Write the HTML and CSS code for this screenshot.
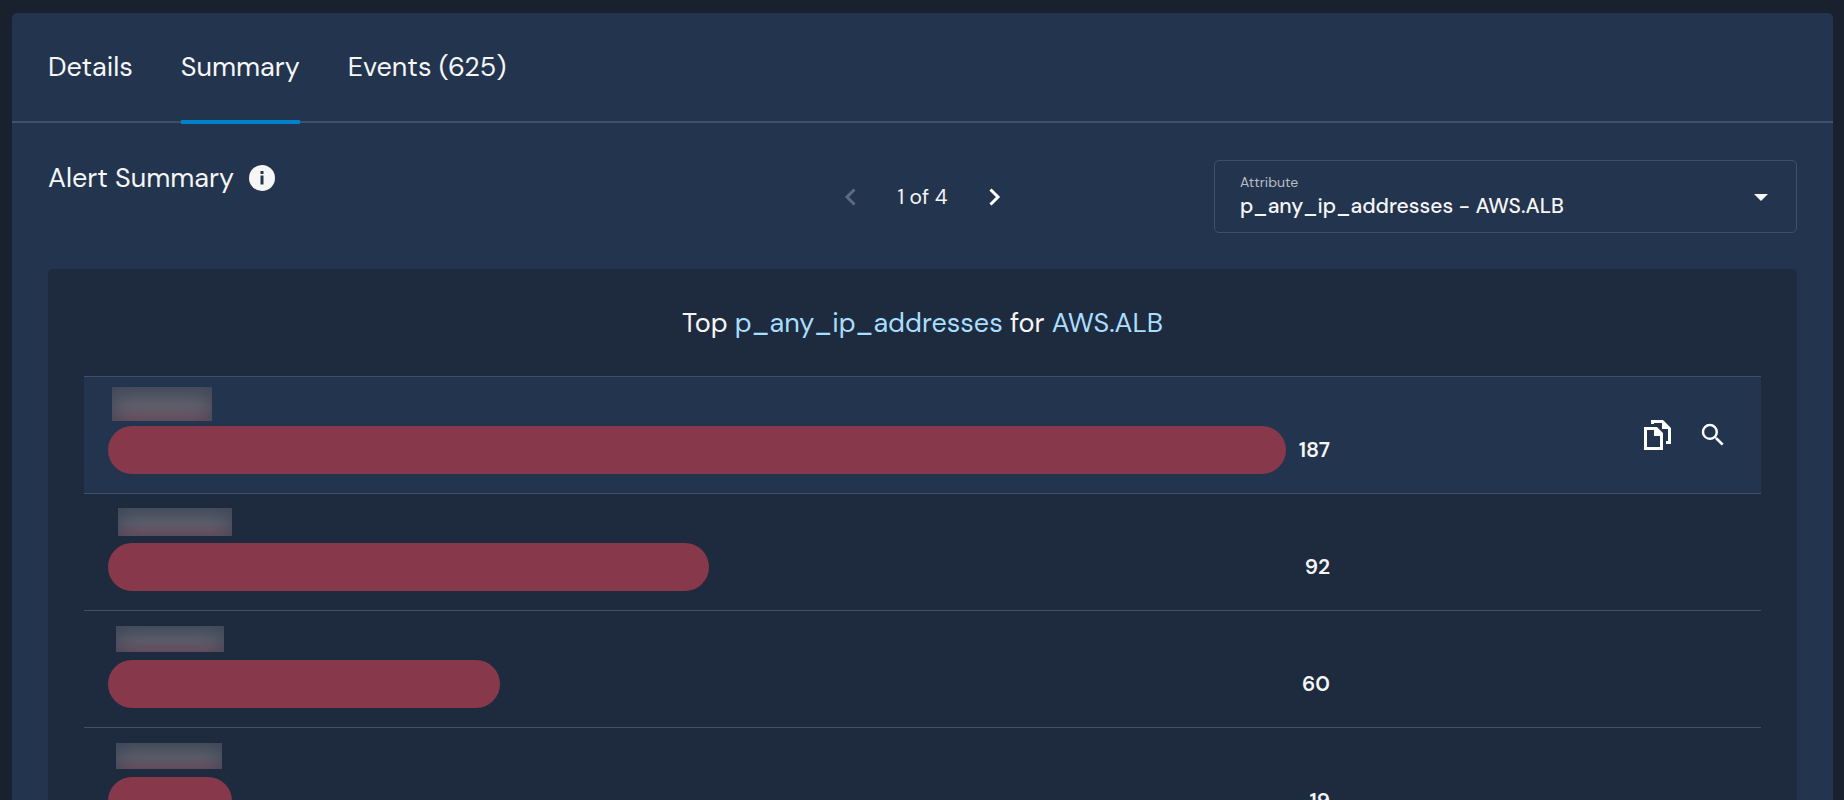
FILE: index.html
```html
<!DOCTYPE html>
<html lang="en">
<head>
<meta charset="UTF-8" />
<meta name="viewport" content="width=device-width, initial-scale=1" />
<title>Alert Summary</title>
<link rel="stylesheet" href="styles.css">
</head>
<body>
  <main class="panel">
    <nav class="tabs">
      <a href="#details" class="tab">Details</a>
      <a href="#summary" class="tab active" aria-current="page">Summary</a>
      <a href="#events" class="tab">Events (625)</a>
    </nav>

    <section class="summary">
      <div class="toolbar">
        <h1 class="heading">
          Alert Summary
          <svg class="info" viewBox="0 0 26 26" aria-hidden="true">
            <circle cx="13" cy="13" r="13" fill="#f6f6f6"/>
            <path d="M11.5 6h3v3h-3zM11.5 10.500h3v9h-3z" fill="#23344e"/>
          </svg>
        </h1>

        <div class="pager">
          <button class="page-btn" aria-label="Previous" disabled>
            <svg viewBox="0 0 12 18"><path d="M10.500 1.500L3 9l7.500 7.500"/></svg>
          </button>
          <span>1 of 4</span>
          <button class="page-btn" aria-label="Next">
            <svg viewBox="0 0 12 18"><path d="M1.500 1.500L9 9l-7.500 7.500"/></svg>
          </button>
        </div>

        <div class="field">
          <label for="attribute">Attribute</label>
          <select id="attribute">
            <option>p_any_ip_addresses - AWS.ALB</option>
          </select>
          <svg class="caret" viewBox="0 0 14 7" aria-hidden="true"><path d="M0 0h14L7 7z"/></svg>
        </div>
      </div>

      <div class="card">
        <h2 class="title">Top <span>p_any_ip_addresses</span> for <span>AWS.ALB</span></h2>
        <ul class="chart">
          <li class="row selected">
            <div class="track">
              <span class="redacted first"></span>
              <div class="bar" style="width: 100%"></div>
            </div>
            <span class="value">187</span>
            <div class="actions">
              <button class="icon-btn" aria-label="Copy">
                <svg class="copy" viewBox="0 0 27 30"><path fill-rule="evenodd" d="M0 7h13l6 6v17H0zM3 10v17h13V16h-6v-6zM7 0h12l8 8v16h-5v-3h2V9h-6V3h-8v1H7z"/></svg>
              </button>
              <button class="icon-btn" aria-label="Search">
                <svg class="search" viewBox="0 0 24 24"><path d="M15.500 14h-.79l-.28-.27A6.470 6.470 0 0 0 16 9.500 6.500 6.500 0 1 0 9.500 16c1.610 0 3.090-.59 4.230-1.570l.27.28v.79l5 4.990L20.490 19l-4.990-5zm-6 0C7.010 14 5 11.990 5 9.500S7.010 5 9.500 5 14 7.010 14 9.500 11.990 14 9.500 14z"/></svg>
              </button>
            </div>
          </li>
          <li class="row">
            <div class="track">
              <span class="redacted second"></span>
              <div class="bar" style="width: 51%"></div>
            </div>
            <span class="value">92</span>
          </li>
          <li class="row">
            <div class="track">
              <span class="redacted third"></span>
              <div class="bar" style="width: 33.300%"></div>
            </div>
            <span class="value">60</span>
          </li>
          <li class="row">
            <div class="track">
              <span class="redacted fourth"></span>
              <div class="bar" style="width: 10.500%"></div>
            </div>
            <span class="value">19</span>
          </li>
        </ul>
      </div>
    </section>
  </main>
</body>
</html>
```
FILE: styles.css
```css
* {
  box-sizing: border-box;
}
html {
  background-color: #19212f;
  overflow: hidden;
}
body {
  margin: 0;
  padding: 13px 11px 0 12px;
  font-family: "DM Sans", Lato, sans-serif;
  font-size: 21px;
  color: #f6f6f6;
}
h1, h2, ul {
  margin: 0;
  padding: 0;
  font-weight: 400;
  list-style: none;
}
button {
  padding: 0;
  border: none;
  background: none;
  color: #fff;
  cursor: pointer;
}
svg {
  display: block;
  fill: currentColor;
}
.panel {
  background-color: #23344e;
  border-radius: 5px;
}
.tabs {
  display: flex;
  gap: 48px;
  height: 110px;
  padding: 0 36px;
  border-bottom: 2px solid #3f506b;
}
.tab {
  height: 111px;
  padding-top: 36px;
  font-size: 27px;
  line-height: 36px;
  color: inherit;
  text-decoration: none;
}
.tab.active {
  border-bottom: 4px solid #0081c9;
}
.summary {
  padding: 37px 36px 0;
}
.toolbar {
  display: grid;
  grid-template-columns: 1fr 1fr 1fr;
  align-items: center;
  height: 73px;
}
.heading {
  display: flex;
  align-items: center;
  align-self: start;
  gap: 15px;
  font-size: 27px;
  line-height: 36px;
}
.info {
  width: 26px;
  height: 26px;
}
.pager {
  display: flex;
  align-items: center;
  justify-content: center;
  gap: 41px;
}
.page-btn svg {
  width: 12px;
  height: 18px;
  fill: none;
  stroke: currentColor;
  stroke-width: 3px;
}
.page-btn:disabled {
  color: #5d6a7f;
}
.field {
  position: relative;
  height: 73px;
  border: 1px solid #3f506b;
  border-radius: 5px;
}
.field label {
  position: absolute;
  top: 11px;
  left: 25px;
  font-size: 14px;
  line-height: 20px;
  color: #b9bcc2;
}
.field select {
  width: 100%;
  height: 100%;
  padding: 18px 25px 0;
  appearance: none;
  border: none;
  background: none;
  color: #f6f6f6;
  font: inherit;
  font-weight: 500;
}
.caret {
  position: absolute;
  top: 33px;
  right: 28px;
  width: 14px;
  height: 7px;
  pointer-events: none;
}
.card {
  margin-top: 36px;
  padding: 36px 36px 0;
  border-radius: 5px;
  background-color: #1e2b3e;
}
.title {
  font-size: 27px;
  line-height: 36px;
  text-align: center;
}
.title span {
  color: #a8deff;
}
.chart {
  margin-top: 35px;
  border-top: 1px solid #3f506b;
}
.row {
  display: grid;
  grid-template-columns: 1fr 44px 407px;
  height: 117px;
  padding: 0 24px;
  border-bottom: 1px solid #3f506b;
}
.row.selected {
  background-color: #23344e;
}
.track {
  display: grid;
  grid-template-rows: 49px 48px;
}
.bar {
  border-radius: 24px;
  background-color: #87384b;
}
.redacted {
  align-self: end;
  background: linear-gradient(#4f5663, #62616d 55%, #7a5262);
  box-shadow: inset 0 2px 22px #3c4556;
}
.first {
  width: 100px;
  height: 34px;
  margin: 0 0 5px 4px;
}
.second {
  width: 114px;
  height: 28px;
  margin: 0 0 7px 10px;
}
.third {
  width: 108px;
  height: 26px;
  margin: 0 0 8px 8px;
}
.fourth {
  width: 106px;
  height: 26px;
  margin: 0 0 8px 8px;
}
.value {
  margin-top: 49px;
  font-weight: 600;
  line-height: 48px;
  text-align: right;
}
.actions {
  display: flex;
  align-items: center;
  justify-content: flex-end;
  gap: 27px;
  padding-right: 9px;
}
.copy {
  width: 27px;
  height: 30px;
}
.search {
  width: 30px;
  height: 30px;
}
```
